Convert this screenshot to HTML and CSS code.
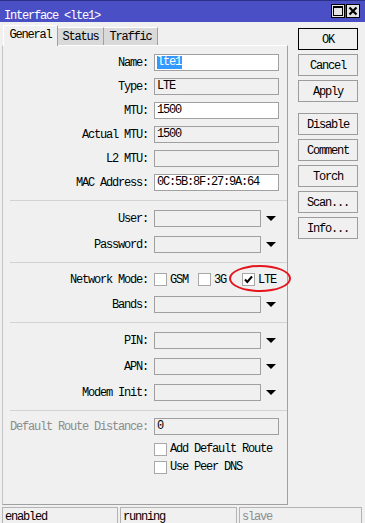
FILE: index.html
```html
<!DOCTYPE html>
<html lang="en">
<head>
  <meta charset="UTF-8" />
  <title>Interface &lt;lte1&gt;</title>
  <link rel="stylesheet" href="styles.css">
</head>
<body>
  <div class="window">

    <!-- Title bar -->
    <div class="titlebar">
      <span class="title">Interface &lt;lte1&gt;</span>
      <div class="tb-btns">
        <span class="tb-btn">
          <svg width="12" height="12" viewBox="0 0 12 12"><rect x="1.5" y="1.5" width="9" height="9" fill="none" stroke="#000" stroke-width="1"/><rect x="1" y="1" width="10" height="2" fill="#000"/></svg>
        </span>
        <span class="tb-btn">
          <svg width="12" height="12" viewBox="0 0 12 12"><path d="M2.5 2.5 L9.5 9.5 M9.5 2.5 L2.5 9.5" stroke="#000" stroke-width="2.2"/></svg>
        </span>
      </div>
    </div>

    <div class="main">
      <div class="left">
        <div class="tabs">
          <div class="tab active">General</div>
          <div class="tab status-tab">Status</div>
          <div class="tab traffic-tab">Traffic</div>
        </div>

        <div class="panel">
          <!-- General -->
          <div class="section first">
            <div class="row"><span class="lbl">Name:</span><div class="field"><span class="sel">lte1</span></div></div>
            <div class="row"><span class="lbl">Type:</span><div class="field ro">LTE</div></div>
            <div class="row"><span class="lbl">MTU:</span><div class="field">1500</div></div>
            <div class="row"><span class="lbl">Actual MTU:</span><div class="field ro">1500</div></div>
            <div class="row"><span class="lbl">L2 MTU:</span><div class="field ro"></div></div>
            <div class="row"><span class="lbl">MAC Address:</span><div class="field">0C:5B:8F:27:9A:64</div></div>
          </div>

          <!-- Auth -->
          <div class="section combos">
            <div class="row"><span class="lbl">User:</span><div class="field combo ro"></div><span class="arrow"></span></div>
            <div class="row"><span class="lbl">Password:</span><div class="field combo ro"></div><span class="arrow"></span></div>
          </div>

          <!-- Mode -->
          <div class="section mode">
            <div class="row">
              <span class="lbl">Network Mode:</span>
              <span class="opt"><span class="cb"></span>GSM</span>
              <span class="opt"><span class="cb"></span>3G</span>
              <span class="opt lte">
                <span class="cb"><svg width="11" height="11" viewBox="0 0 11 11"><path d="M2 5.5 L4.3 8 L9 2.5" fill="none" stroke="#000" stroke-width="2"/></svg></span>LTE
                <span class="ring"></span>
              </span>
            </div>
            <div class="row"><span class="lbl">Bands:</span><div class="field combo ro"></div><span class="arrow"></span></div>
          </div>

          <!-- SIM -->
          <div class="section combos">
            <div class="row"><span class="lbl">PIN:</span><div class="field combo ro"></div><span class="arrow"></span></div>
            <div class="row"><span class="lbl">APN:</span><div class="field combo ro"></div><span class="arrow"></span></div>
            <div class="row"><span class="lbl">Modem Init:</span><div class="field combo ro"></div><span class="arrow"></span></div>
          </div>

          <!-- Route -->
          <div class="section route">
            <div class="row distance"><span class="lbl muted">Default Route Distance:</span><div class="field ro">0</div></div>
            <div class="check-row"><span class="cb"></span>Add Default Route</div>
            <div class="check-row"><span class="cb"></span>Use Peer DNS</div>
          </div>
        </div>
      </div>

      <div class="buttons">
        <button class="btn default">OK</button>
        <button class="btn">Cancel</button>
        <button class="btn">Apply</button>
        <button class="btn spaced">Disable</button>
        <button class="btn">Comment</button>
        <button class="btn">Torch</button>
        <button class="btn">Scan...</button>
        <button class="btn">Info...</button>
      </div>
    </div>

    <div class="statusbar">
      <div class="stat s1">enabled</div>
      <div class="stat s2">running</div>
      <div class="stat s3 muted">slave</div>
    </div>
  </div>
</body>
</html>
```

FILE: styles.css
```css
body {
  margin: 0;
  background: #f0f0f0;
  font-family: "Liberation Mono", "DejaVu Sans Mono", monospace;
  font-size: 12px;
  letter-spacing: -1.2px;
  color: #000;
}

.window {
  width: 365px;
  height: 523px;
  overflow: hidden;
  display: flex;
  flex-direction: column;
}

/* Title bar */
.titlebar {
  flex-shrink: 0;
  height: 22px;
  box-sizing: border-box;
  background: #4b4fc6;
  border-top: 1px solid #2c2f86;
  display: flex;
  align-items: center;
  justify-content: space-between;
  padding: 0 5px 0 4px;
  color: #fff;
}

.title {
  padding-top: 9px;
}

.tb-btns {
  display: flex;
  gap: 1px;
  margin-top: -1px;
}

.tb-btn {
  width: 14px;
  height: 14px;
  box-sizing: border-box;
  background: #e4e4e4;
  border: 1px solid #000;
  display: flex;
  align-items: center;
  justify-content: center;
}

/* Main area */
.main {
  flex-shrink: 0;
  height: 483px;
  display: flex;
}

.left {
  padding-top: 3px;
  margin-left: 2px;
}

.tabs {
  height: 20px;
  display: flex;
  align-items: flex-end;
  padding-left: 1px;
}

.tab {
  height: 18px;
  box-sizing: border-box;
  display: flex;
  align-items: center;
  justify-content: center;
  background: #d9d9d9;
  border-top: 1px solid #fff;
  border-right: 1px solid #a0a0a0;
  padding-top: 1px;
}

.tab.active {
  width: 55px;
  height: 21px;
  margin-bottom: -1px;
  position: relative;
  z-index: 1;
  background: #f0f0f0;
  border-left: 1px solid #fff;
  padding: 0 0 3px;
}

.status-tab { width: 46px; }
.traffic-tab { width: 54px; }

.panel {
  width: 286px;
  height: 460px;
  box-sizing: border-box;
  border: 1px solid #a0a0a0;
  border-top-color: #fff;
  border-left-color: #c4c4c4;
}

.section {
  display: flex;
  flex-direction: column;
  gap: 7px;
  padding: 9px 0;
  margin-left: 7px;
  border-top: 1px solid #d2d2d2;
}

.section.first {
  border-top: none;
  padding-top: 8px;
}

.section.combos { gap: 9px; }

.section.mode {
  gap: 8px;
  padding-top: 8px;
}

.section.route {
  gap: 0;
  padding-top: 7px;
}

.row {
  height: 17px;
  display: flex;
  align-items: center;
}

.distance { margin-bottom: 5px; }

.lbl {
  width: 138px;
  margin-right: 6px;
  text-align: right;
  white-space: nowrap;
}

.muted { color: #8c8c8c; }

.field {
  width: 125px;
  height: 17px;
  box-sizing: border-box;
  border: 1px solid #a0a0a0;
  background: #fff;
  padding-left: 2px;
  line-height: 15px;
  white-space: nowrap;
}

.field.ro { background: #f0f0f0; }
.field.combo { width: 107px; }

.sel {
  background: #3399ff;
  color: #fff;
  display: inline-block;
  line-height: 13px;
  padding-right: 1px;
}

.arrow {
  margin-left: 5px;
  width: 0;
  height: 0;
  border-left: 5px solid transparent;
  border-right: 5px solid transparent;
  border-top: 5px solid #000;
}

.cb {
  width: 13px;
  height: 13px;
  box-sizing: border-box;
  border: 1px solid #a8a8a8;
  background: #fff;
  margin-right: 3px;
  display: inline-flex;
  align-items: center;
  justify-content: center;
  flex-shrink: 0;
}

.opt {
  width: 44px;
  height: 17px;
  display: flex;
  align-items: center;
}

.lte { position: relative; }

.ring {
  position: absolute;
  left: -13px;
  top: -6px;
  width: 62px;
  height: 27px;
  box-sizing: border-box;
  border: 2px solid #e5141c;
  border-radius: 50%;
}

.check-row {
  height: 18px;
  display: flex;
  align-items: center;
  padding-left: 144px;
}

/* Right buttons */
.buttons {
  margin-left: 10px;
  padding-top: 6px;
  display: flex;
  flex-direction: column;
  gap: 4px;
}

.btn {
  width: 60px;
  height: 22px;
  box-sizing: border-box;
  padding: 2px 0 0;
  background: #f0f0f0;
  border: 1px solid #9c9c9c;
  font-family: "Liberation Mono", "DejaVu Sans Mono", monospace;
  font-size: 12px;
  letter-spacing: -1.2px;
  color: #000;
}

.btn.default { border-color: #000; }
.btn.spaced { margin-top: 7px; }

/* Status bar */
.statusbar {
  flex-shrink: 0;
  margin-top: 2px;
  margin-left: 2px;
  display: flex;
  gap: 2px;
}

.stat {
  height: 18px;
  box-sizing: border-box;
  border: 1px solid #b4b4b4;
  padding: 1px 0 0 2px;
  line-height: 16px;
}

.s1 { width: 116px; }
.s2 { width: 117px; }
.s3 { width: 123px; }
```
